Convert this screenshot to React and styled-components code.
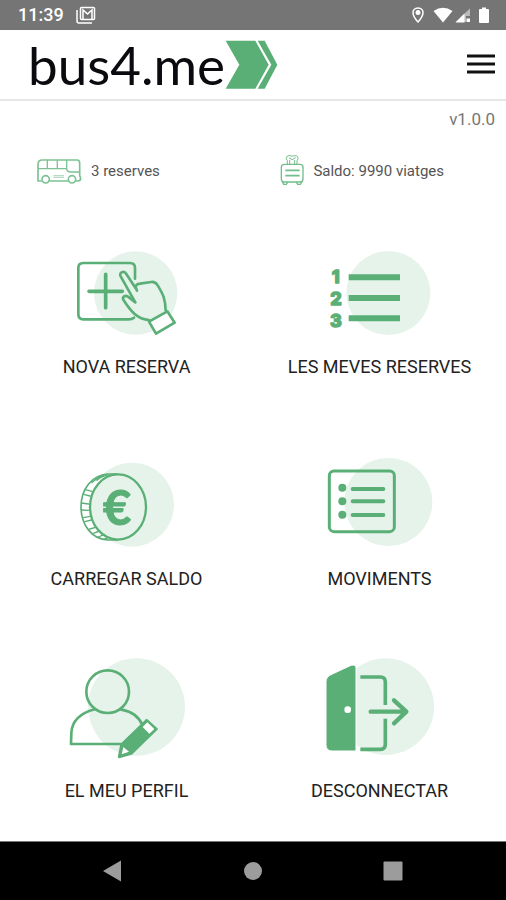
import styled, { createGlobalStyle } from "styled-components";

const GREEN = "#5aaf76";
const PALE = "#e5f3ea";

const GlobalStyle = createGlobalStyle`
  * {
    box-sizing: border-box;
  }

  body {
    margin: 0;
    background: #fff;
    color: #222;
    font-family: Roboto, "Liberation Sans", sans-serif;
  }
`;

const Page = styled.div`
  min-height: 100vh;
  display: flex;
  flex-direction: column;
`;

const StatusBar = styled.div`
  height: 30px;
  padding: 0 14px 0 18px;
  display: flex;
  align-items: center;
  background: #757575;
  color: #fff;
`;

const Clock = styled.span`
  margin-right: 12px;
  font-size: 18px;
  font-weight: 500;
  line-height: 30px;
`;

const StatusIcons = styled.div`
  margin-left: auto;
  display: flex;
  align-items: center;
`;

const Header = styled.header`
  height: 71px;
  padding: 0 10px 0 28px;
  display: flex;
  align-items: center;
  justify-content: space-between;
  border-bottom: 2px solid #e6e6e6;
`;

const Logo = styled.a`
  display: flex;
  align-items: center;
  color: #0b0b0f;
  font-family: Lato, "Liberation Sans", sans-serif;
  font-size: 53px;
  line-height: 64px;
  text-decoration: none;
`;

const MenuButton = styled.button`
  padding: 0;
  border: 0;
  background: none;
  display: flex;
  cursor: pointer;
`;

const Main = styled.main`
  flex: 1;
  display: flex;
  flex-direction: column;
`;

const Version = styled.p`
  margin: 0;
  padding: 8px 11px 0;
  color: #777;
  font-size: 17px;
  line-height: 20px;
  text-align: right;
`;

const Stats = styled.div`
  height: 40px;
  margin-top: 22px;
  padding: 0 62px 0 36px;
  display: flex;
  align-items: center;
  justify-content: space-between;
`;

const Stat = styled.div`
  display: flex;
  align-items: center;
  gap: 8px;
  color: #555;
  font-size: 15px;
  line-height: 20px;
`;

const Menu = styled.nav`
  margin-top: 42px;
  display: grid;
  grid-template-columns: 1fr 1fr;
  row-gap: 68px;
`;

const Tile = styled.button`
  padding: 0;
  border: 0;
  background: none;
  display: flex;
  flex-direction: column;
  align-items: center;
  gap: 20px;
  color: #222;
  font-family: inherit;
  font-size: 18px;
  line-height: 20px;
  cursor: pointer;
`;

const NavBar = styled.div`
  height: 59px;
  display: flex;
  align-items: center;
  justify-content: center;
  gap: 116px;
  border-top: 1px solid #777;
  background: #000;
`;

const NavButton = styled.button`
  width: 24px;
  height: 24px;
  padding: 0;
  border: 0;
  background: none;
  color: #9c9c9c;
`;

// Each tile drawing shares the same 120x104 frame
const TileIcon = ({ x, y, children }) => (
  <svg
    width="120"
    height="104"
    viewBox={`${x} ${y} 360 312`}
    fill="none"
    stroke={GREEN}
    strokeWidth="9"
    strokeLinecap="round"
    strokeLinejoin="round"
    aria-hidden="true"
  >
    {children}
  </svg>
);

const NewBookingIcon = () => (
  <TileIcon x={51} y={-21}>
    <circle cx="257" cy="159" r="125" fill={PALE} stroke="none" />
    <path d="M255 116V84Q255 69 240 69H100Q85 69 85 84V223Q85 238 100 238H236Q246 238 252 233" strokeWidth="8" />
    <path d="M167 103V203M117 154H217" strokeWidth="11" />
    <path
      d="M256 187L212 109C206 97 222 90 229 102L260 149M261 152C253 137 259 132 270 131L304 126C313 125 318 128 323 136C340 164 346 177 347 211M256 187L234 170C224 164 215 172 221 181C241 212 261 238 297 240"
      fill={PALE}
      strokeWidth="8"
    />
    <path d="M297 245L352 214L374 248L318 281Z" fill="#fff" strokeWidth="8" />
  </TileIcon>
);

const BookingsIcon = () => (
  <TileIcon x={150} y={-21}>
    <circle cx="355" cy="159" r="126" fill={PALE} stroke="none" />
    <path d="M236 112H390M236 174H390M236 235H390" strokeWidth="18" strokeLinecap="butt" />
    <g
      fill={GREEN}
      strokeWidth="4"
      fontFamily="Inter, sans-serif"
      fontWeight="800"
      fontSize="54"
      textAnchor="middle"
    >
      <text x="197" y="130">1</text>
      <text x="198" y="196">2</text>
      <text x="198" y="262">3</text>
    </g>
  </TileIcon>
);

const TopUpIcon = () => (
  <TileIcon x={81} y={-15}>
    <circle cx="276" cy="164" r="126" fill={PALE} stroke="none" />
    <path
      d="M232 72H203C157 75 123 116 123 171C123 226 157 268 203 270H232"
      fill="#fff"
      strokeWidth="5"
    />
    <ellipse cx="234" cy="171" rx="84" ry="98" fill={PALE} strokeWidth="7" />
    <path
      d="M204 74C190 78 180 83 171 91M189 76C174 82 164 89 156 98M131 133L150 138M136 119L156 124M124 159L146 162M124 180L146 181M130 203L150 199M134 215L154 210M149 237L167 232M160 250L179 243M175 261L193 253M190 268L206 262"
      strokeWidth="4"
    />
    <text
      x="231"
      y="225"
      fill={GREEN}
      strokeWidth="3"
      fontFamily="Lato, sans-serif"
      fontWeight="700"
      fontSize="146"
      textAnchor="middle"
    >
      €
    </text>
  </TileIcon>
);

const MovementsIcon = () => (
  <TileIcon x={60} y={-15}>
    <circle cx="265" cy="156" r="132" fill={PALE} stroke="none" />
    <rect x="88" y="63" width="195" height="182" rx="14" />
    <path d="M158 117H250M158 154H250M158 195H250" strokeWidth="12" />
    <g fill={GREEN} stroke="none">
      <circle cx="127" cy="113" r="12" />
      <circle cx="127" cy="154" r="12" />
      <circle cx="127" cy="194" r="12" />
    </g>
  </TileIcon>
);

const ProfileIcon = () => (
  <TileIcon x={51} y={20}>
    <circle cx="259" cy="170" r="146" fill={PALE} stroke="none" />
    <path
      d="M134 177C93 188 66 208 64 248L63 281H216L276 222C266 198 243 183 212 177Z"
      fill="#fff"
      stroke="none"
    />
    <path d="M134 177H212C243 183 266 198 276 222L216 281H164C135 255 118 215 115 184Z" fill={PALE} stroke="none" />
    <circle cx="173" cy="124" r="64" strokeWidth="8" />
    <path
      d="M134 177C93 188 66 208 64 248L63 281H216M212 177C243 183 266 198 276 222"
      strokeWidth="8"
    />
    <path d="M214 283L290 209L320 236L244 310L207 320Z" fill={GREEN} strokeWidth="7" />
    <path d="M292 216L313 236L298 250L278 230Z" fill="#fff" stroke="none" />
    <path d="M220 290L237 304L215 312Z" fill="#fff" stroke="none" />
  </TileIcon>
);

const LogoutIcon = () => (
  <TileIcon x={60} y={20}>
    <circle cx="257" cy="169" r="145" fill={PALE} stroke="none" />
    <path
      d="M95 72L153 45Q168 41 168 54V302H97Q78 302 78 283V94Q78 79 95 72Z"
      fill={GREEN}
      stroke="#fff"
      strokeWidth="3"
    />
    <circle cx="143" cy="178" r="10" fill="#fff" stroke="none" />
    <path d="M181 80H241Q256 80 256 95V164M256 205V282Q256 297 241 297H181" strokeWidth="11" strokeLinecap="butt" />
    <path d="M212 184H319M282 150L319 184L282 219" strokeWidth="13" />
  </TileIcon>
);

const BusIcon = () => (
  <svg
    width="47"
    height="28"
    viewBox="48 45 141 84"
    fill="none"
    stroke="#7cc294"
    strokeWidth="5"
    aria-hidden="true"
  >
    <path d="M65 117H54V67Q54 54 67 54H172Q179 54 179 64V100L182 109Q182 117 174 117H168M88 117H144" />
    <path d="M54 80H140M82 54V80M112 54V80M140 54V80Q141 90 152 90H179" strokeWidth="4" />
    <path d="M100 101H132M100 106H132" strokeWidth="2" />
    <circle cx="77" cy="112" r="11" />
    <circle cx="156" cy="112" r="11" />
  </svg>
);

const SuitcaseIcon = () => (
  <svg
    width="26"
    height="34"
    viewBox="60 42 78 102"
    fill="none"
    stroke="#72bd8b"
    strokeWidth="4"
    aria-hidden="true"
  >
    <rect x="67" y="73" width="65" height="53" rx="9" />
    <path d="M70 125L74 133H82L86 127M112 127L116 133H124L129 125" />
    <path d="M85 73V62Q79 56 84 49Q91 44 96 48H105Q112 44 116 50Q119 57 114 62V73M92 73V60M107 73V60M90 53L99 59L110 53" strokeWidth="3" />
    <path d="M79 91H122M79 107H122" strokeWidth="5" />
  </svg>
);

const tiles = [
  { label: "NOVA RESERVA", Icon: NewBookingIcon },
  { label: "LES MEVES RESERVES", Icon: BookingsIcon },
  { label: "CARREGAR SALDO", Icon: TopUpIcon },
  { label: "MOVIMENTS", Icon: MovementsIcon },
  { label: "EL MEU PERFIL", Icon: ProfileIcon },
  { label: "DESCONNECTAR", Icon: LogoutIcon },
];

export default function App() {
  return (
    <Page>
      <GlobalStyle />

      <StatusBar>
        <Clock>11:39</Clock>
        <svg width="20" height="18" viewBox="0 0 40 36" fill="none" stroke="#fff" aria-hidden="true">
          <path d="M2 8V30Q2 34 6 34H32" strokeWidth="3" />
          <rect x="9" y="3" width="28" height="24" rx="2" strokeWidth="3" />
          <path d="M14 26V8L23 16L32 8V26" strokeWidth="3" />
        </svg>
        <StatusIcons>
          <svg width="84" height="20" viewBox="0 0 168 40" fill="#fff" aria-hidden="true">
            <path
              d="M20 6C13 6 10 11 10 15C10 23 20 34 20 34S30 23 30 15C30 11 27 6 20 6Z"
              fill="none"
              stroke="#fff"
              strokeWidth="3"
            />
            <circle cx="20" cy="15" r="5" />
            <path d="M51 12Q70 -1 89 12L70 35Z" />
            <path d="M124 7V22H116V34H95Z" opacity=".5" />
            <path d="M113 17V35H95Z" />
            <rect x="117" y="27" width="7" height="7" />
            <path d="M148 5H156V8H160Q162 8 162 10V34Q162 36 160 36H144Q142 36 142 34V10Q142 8 144 8H148Z" />
          </svg>
        </StatusIcons>
      </StatusBar>

      <Header>
        <Logo href="#inici">
          bus4.me
          <svg width="53" height="50" viewBox="669 123 159 150" fill={GREEN} aria-hidden="true">
            <path d="M671 125H760L800 197L760 269H671L712 197Z" />
            <path d="M767 125H788L826 197L788 269H767L808 197Z" />
          </svg>
        </Logo>
        <MenuButton aria-label="Menú">
          <svg width="30" height="24" viewBox="0 0 30 24" stroke="#111" strokeWidth="3" aria-hidden="true">
            <path d="M1 3H29M1 11H29M1 19H29" />
          </svg>
        </MenuButton>
      </Header>

      <Main>
        <Version>v1.0.0</Version>

        <Stats>
          <Stat>
            <BusIcon />
            <span>3 reserves</span>
          </Stat>
          <Stat>
            <SuitcaseIcon />
            <span>Saldo: 9990 viatges</span>
          </Stat>
        </Stats>

        <Menu>
          {tiles.map(({ label, Icon }) => (
            <Tile key={label}>
              <Icon />
              <span>{label}</span>
            </Tile>
          ))}
        </Menu>
      </Main>

      <NavBar>
        <NavButton aria-label="Enrere">
          <svg width="24" height="24" viewBox="0 0 24 24" fill="currentColor">
            <path d="M2 12L20 1.5V22.5Z" />
          </svg>
        </NavButton>
        <NavButton aria-label="Inici">
          <svg width="24" height="24" viewBox="0 0 24 24" fill="currentColor">
            <circle cx="12" cy="12" r="9" />
          </svg>
        </NavButton>
        <NavButton aria-label="Recents">
          <svg width="24" height="24" viewBox="0 0 24 24" fill="currentColor">
            <rect x="2.5" y="2.5" width="19" height="19" rx="1" />
          </svg>
        </NavButton>
      </NavBar>
    </Page>
  );
}
